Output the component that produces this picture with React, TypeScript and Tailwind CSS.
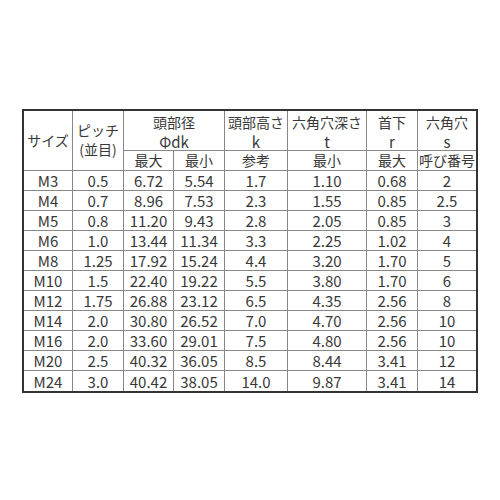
import React from "react";

const rows: string[][] = [
  ["M3", "0.5", "6.72", "5.54", "1.7", "1.10", "0.68", "2"],
  ["M4", "0.7", "8.96", "7.53", "2.3", "1.55", "0.85", "2.5"],
  ["M5", "0.8", "11.20", "9.43", "2.8", "2.05", "0.85", "3"],
  ["M6", "1.0", "13.44", "11.34", "3.3", "2.25", "1.02", "4"],
  ["M8", "1.25", "17.92", "15.24", "4.4", "3.20", "1.70", "5"],
  ["M10", "1.5", "22.40", "19.22", "5.5", "3.80", "1.70", "6"],
  ["M12", "1.75", "26.88", "23.12", "6.5", "4.35", "2.56", "8"],
  ["M14", "2.0", "30.80", "26.52", "7.0", "4.70", "2.56", "10"],
  ["M16", "2.0", "33.60", "29.01", "7.5", "4.80", "2.56", "10"],
  ["M20", "2.5", "40.32", "36.05", "8.5", "8.44", "3.41", "12"],
  ["M24", "3.0", "40.42", "38.05", "14.0", "9.87", "3.41", "14"],
];

export default function App() {
  return (
    <div
      className="w-[500px] h-[500px] bg-white text-[#383838] text-[15px]"
      style={{ fontFamily: '"Noto Sans CJK JP", "Noto Sans", sans-serif' }}
    >
      <div className="pt-[109px] pl-[22px]">
        <div className="w-[456px] border-2 border-[#333]">
          <div className="grid grid-cols-[49px_51px_50px_51px_63px_79px_51px_58px] grid-rows-[40px_20px] leading-[19px] text-[14px]">
            <div className="row-span-2 border-r border-b border-[#888] flex items-center justify-center">
              サイズ
            </div>
            <div className="row-span-2 border-r border-b border-[#888] flex flex-col items-center justify-center pb-[2px]">
              <span>ピッチ</span>
              <span>(並目)</span>
            </div>
            <div className="col-span-2 border-r border-b border-[#888] flex flex-col items-center justify-center pt-[2px]">
              <span>頭部径</span>
              <span className="text-[15px]">Φdk</span>
            </div>
            <div className="border-r border-b border-[#888] flex flex-col items-center justify-center pt-[2px]">
              <span>頭部高さ</span>
              <span className="text-[15px]">k</span>
            </div>
            <div className="border-r border-b border-[#888] flex flex-col items-center justify-center pt-[2px]">
              <span>六角穴深さ</span>
              <span className="text-[15px]">t</span>
            </div>
            <div className="border-r border-b border-[#888] flex flex-col items-center justify-center pt-[2px]">
              <span>首下</span>
              <span className="text-[15px]">r</span>
            </div>
            <div className="border-b border-[#888] flex flex-col items-center justify-center pt-[2px]">
              <span>六角穴</span>
              <span className="text-[15px]">s</span>
            </div>
            <div className="border-r border-b border-[#888] flex items-center justify-center">最大</div>
            <div className="border-r border-b border-[#888] flex items-center justify-center">最小</div>
            <div className="border-r border-b border-[#888] flex items-center justify-center">参考</div>
            <div className="border-r border-b border-[#888] flex items-center justify-center">最小</div>
            <div className="border-r border-b border-[#888] flex items-center justify-center">最大</div>
            <div className="border-b border-[#888] flex items-center justify-center">呼び番号</div>
          </div>
          <div className="grid grid-cols-[49px_51px_50px_51px_63px_79px_51px_58px] auto-rows-[20px] leading-[19px]">
            {rows.map((r, ri) =>
              r.map((c, ci) => (
                <div
                  key={`${ri}-${ci}`}
                  className={`flex items-center justify-center border-[#888] ${ci < 7 ? "border-r" : ""} ${ri < rows.length - 1 ? "border-b" : ""}`}
                >
                  {c}
                </div>
              ))
            )}
          </div>
        </div>
      </div>
    </div>
  );
}
